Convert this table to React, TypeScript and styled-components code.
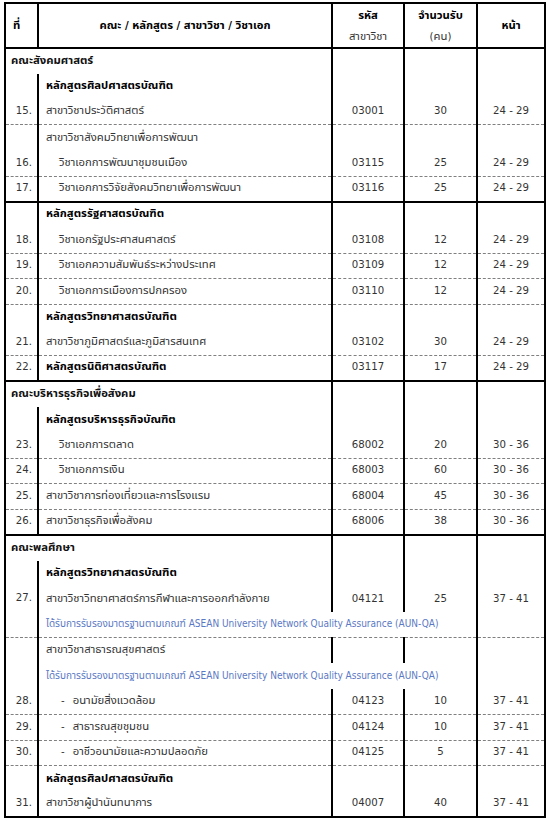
import React from "react";
import styled, { createGlobalStyle, css } from "styled-components";

const GlobalStyle = createGlobalStyle`
  html, body {
    margin: 0;
    background: #fff;
  }
  body {
    font-family: Tahoma, "DejaVu Sans Condensed", "Noto Sans Thai", "DejaVu Sans", sans-serif;
    font-size: 11.3px;
    color: #333;
  }
`;

const Page = styled.div`
  padding: 2px 1px 2px 4px;
`;

const Table = styled.table`
  width: 540px;
  border-collapse: collapse;
  table-layout: fixed;
  border: 2px solid #000;
`;

const Col = styled.col<{ $w: number }>`
  width: ${(p) => p.$w}px;
`;

type Sep = "solid" | "dashed";

const Row = styled.tr<{ $sep?: Sep }>`
  height: 25.65px;
  ${(p) =>
    p.$sep === "solid" &&
    css`
      & > td {
        border-top: 2px solid #000;
      }
    `}
  ${(p) =>
    p.$sep === "dashed" &&
    css`
      & > td {
        border-top: 1px dashed #808080;
      }
    `}
`;

const HeadCell = styled.th<{ $align?: "left" | "center" }>`
  height: 43px;
  border: 2px solid #000;
  padding: 0 7px;
  text-align: ${(p) => p.$align ?? "center"};
  vertical-align: middle;
  font-weight: bold;
  color: #000;
  line-height: 21px;
`;

const HeadSub = styled.span`
  display: block;
  font-weight: normal;
  color: #333;
`;

const Cell = styled.td<{ $valign?: "top" | "middle" | "bottom" }>`
  border-left: 2px solid #000;
  border-right: 2px solid #000;
  padding: 0 6px 3px;
  line-height: 21px;
  vertical-align: ${(p) => p.$valign ?? "bottom"};
  white-space: nowrap;
`;

const Num = styled(Cell)`
  text-align: right;
  padding-right: 5px;
`;

const Name = styled(Cell)<{ $indent?: number; $bold?: boolean }>`
  text-align: left;
  padding-left: ${(p) => 7 + (p.$indent ?? 0)}px;
  ${(p) =>
    p.$bold &&
    css`
      font-weight: bold;
      color: #000;
    `}
`;

const Faculty = styled(Cell).attrs({ colSpan: 2 })`
  padding-left: 5px;
  font-weight: bold;
  color: #111;
`;

const Center = styled(Cell)`
  text-align: center;
`;

const Note = styled(Cell).attrs({ colSpan: 3 })`
  padding-left: 7px;
  font-size: 10px;
  color: #5a78c4;
`;

const Dash = styled.span`
  margin-right: 8px;
`;

const NOTE =
  "ได้รับการรับรองมาตรฐานตามเกณฑ์ ASEAN University Network Quality Assurance (AUN-QA)";

export default function App() {
  return (
    <Page>
      <GlobalStyle />
      <Table>
        <colgroup>
          <Col $w={33} />
          <Col $w={294} />
          <Col $w={72} />
          <Col $w={73} />
          <Col $w={68} />
        </colgroup>
        <thead>
          <tr>
            <HeadCell $align="left">ที่</HeadCell>
            <HeadCell>คณะ / หลักสูตร / สาขาวิชา / วิชาเอก</HeadCell>
            <HeadCell>
              รหัส
              <HeadSub>สาขาวิชา</HeadSub>
            </HeadCell>
            <HeadCell>
              จำนวนรับ
              <HeadSub>(คน)</HeadSub>
            </HeadCell>
            <HeadCell>หน้า</HeadCell>
          </tr>
        </thead>
        <tbody>
          {/* คณะสังคมศาสตร์ */}
          <Row>
            <Faculty>คณะสังคมศาสตร์</Faculty>
            <Center rowSpan={3}>03001</Center>
            <Center rowSpan={3}>30</Center>
            <Center rowSpan={3}>24 - 29</Center>
          </Row>
          <Row>
            <Num rowSpan={2}>15.</Num>
            <Name $bold>หลักสูตรศิลปศาสตรบัณฑิต</Name>
          </Row>
          <Row>
            <Name>สาขาวิชาประวัติศาสตร์</Name>
          </Row>
          <Row $sep="dashed">
            <Num rowSpan={2}>16.</Num>
            <Name>สาขาวิชาสังคมวิทยาเพื่อการพัฒนา</Name>
            <Center rowSpan={2}>03115</Center>
            <Center rowSpan={2}>25</Center>
            <Center rowSpan={2}>24 - 29</Center>
          </Row>
          <Row>
            <Name $indent={13}>วิชาเอกการพัฒนาชุมชนเมือง</Name>
          </Row>
          <Row $sep="dashed">
            <Num>17.</Num>
            <Name $indent={13}>วิชาเอกการวิจัยสังคมวิทยาเพื่อการพัฒนา</Name>
            <Center>03116</Center>
            <Center>25</Center>
            <Center>24 - 29</Center>
          </Row>
          <Row $sep="solid">
            <Num rowSpan={2}>18.</Num>
            <Name $bold>หลักสูตรรัฐศาสตรบัณฑิต</Name>
            <Center rowSpan={2}>03108</Center>
            <Center rowSpan={2}>12</Center>
            <Center rowSpan={2}>24 - 29</Center>
          </Row>
          <Row>
            <Name $indent={13}>วิชาเอกรัฐประศาสนศาสตร์</Name>
          </Row>
          <Row $sep="dashed">
            <Num>19.</Num>
            <Name $indent={13}>วิชาเอกความสัมพันธ์ระหว่างประเทศ</Name>
            <Center>03109</Center>
            <Center>12</Center>
            <Center>24 - 29</Center>
          </Row>
          <Row $sep="dashed">
            <Num>20.</Num>
            <Name $indent={13}>วิชาเอกการเมืองการปกครอง</Name>
            <Center>03110</Center>
            <Center>12</Center>
            <Center>24 - 29</Center>
          </Row>
          <Row $sep="dashed">
            <Num rowSpan={2}>21.</Num>
            <Name $bold>หลักสูตรวิทยาศาสตรบัณฑิต</Name>
            <Center rowSpan={2}>03102</Center>
            <Center rowSpan={2}>30</Center>
            <Center rowSpan={2}>24 - 29</Center>
          </Row>
          <Row>
            <Name>สาขาวิชาภูมิศาสตร์และภูมิสารสนเทศ</Name>
          </Row>
          <Row $sep="dashed">
            <Num>22.</Num>
            <Name $bold>หลักสูตรนิติศาสตรบัณฑิต</Name>
            <Center>03117</Center>
            <Center>17</Center>
            <Center>24 - 29</Center>
          </Row>

          {/* คณะบริหารธุรกิจเพื่อสังคม */}
          <Row $sep="solid">
            <Faculty>คณะบริหารธุรกิจเพื่อสังคม</Faculty>
            <Center rowSpan={3}>68002</Center>
            <Center rowSpan={3}>20</Center>
            <Center rowSpan={3}>30 - 36</Center>
          </Row>
          <Row>
            <Num rowSpan={2}>23.</Num>
            <Name $bold>หลักสูตรบริหารธุรกิจบัณฑิต</Name>
          </Row>
          <Row>
            <Name $indent={13}>วิชาเอกการตลาด</Name>
          </Row>
          <Row $sep="dashed">
            <Num>24.</Num>
            <Name $indent={13}>วิชาเอกการเงิน</Name>
            <Center>68003</Center>
            <Center>60</Center>
            <Center>30 - 36</Center>
          </Row>
          <Row $sep="dashed">
            <Num>25.</Num>
            <Name>สาขาวิชาการท่องเที่ยวและการโรงแรม</Name>
            <Center>68004</Center>
            <Center>45</Center>
            <Center>30 - 36</Center>
          </Row>
          <Row $sep="dashed">
            <Num>26.</Num>
            <Name>สาขาวิชาธุรกิจเพื่อสังคม</Name>
            <Center>68006</Center>
            <Center>38</Center>
            <Center>30 - 36</Center>
          </Row>

          {/* คณะพลศึกษา */}
          <Row $sep="solid">
            <Faculty>คณะพลศึกษา</Faculty>
            <Center rowSpan={3}>04121</Center>
            <Center rowSpan={3}>25</Center>
            <Center rowSpan={3}>37 - 41</Center>
          </Row>
          <Row>
            <Num rowSpan={3} $valign="middle">
              27.
            </Num>
            <Name $bold>หลักสูตรวิทยาศาสตรบัณฑิต</Name>
          </Row>
          <Row>
            <Name>สาขาวิชาวิทยาศาสตร์การกีฬาและการออกกำลังกาย</Name>
          </Row>
          <Row>
            <Note>{NOTE}</Note>
            <Center />
          </Row>
          <Row $sep="dashed">
            <Num rowSpan={3}>28.</Num>
            <Name>สาขาวิชาสาธารณสุขศาสตร์</Name>
            <Center />
            <Center />
            <Center rowSpan={3}>37 - 41</Center>
          </Row>
          <Row>
            <Note>{NOTE}</Note>
          </Row>
          <Row>
            <Name $indent={15}>
              <Dash>-</Dash>อนามัยสิ่งแวดล้อม
            </Name>
            <Center>04123</Center>
            <Center>10</Center>
          </Row>
          <Row $sep="dashed">
            <Num>29.</Num>
            <Name $indent={15}>
              <Dash>-</Dash>สาธารณสุขชุมชน
            </Name>
            <Center>04124</Center>
            <Center>10</Center>
            <Center>37 - 41</Center>
          </Row>
          <Row $sep="dashed">
            <Num>30.</Num>
            <Name $indent={15}>
              <Dash>-</Dash>อาชีวอนามัยและความปลอดภัย
            </Name>
            <Center>04125</Center>
            <Center>5</Center>
            <Center>37 - 41</Center>
          </Row>
          <Row $sep="dashed">
            <Num rowSpan={2}>31.</Num>
            <Name $bold>หลักสูตรศิลปศาสตรบัณฑิต</Name>
            <Center rowSpan={2}>04007</Center>
            <Center rowSpan={2}>40</Center>
            <Center rowSpan={2}>37 - 41</Center>
          </Row>
          <Row>
            <Name>สาขาวิชาผู้นำนันทนาการ</Name>
          </Row>
        </tbody>
      </Table>
    </Page>
  );
}
